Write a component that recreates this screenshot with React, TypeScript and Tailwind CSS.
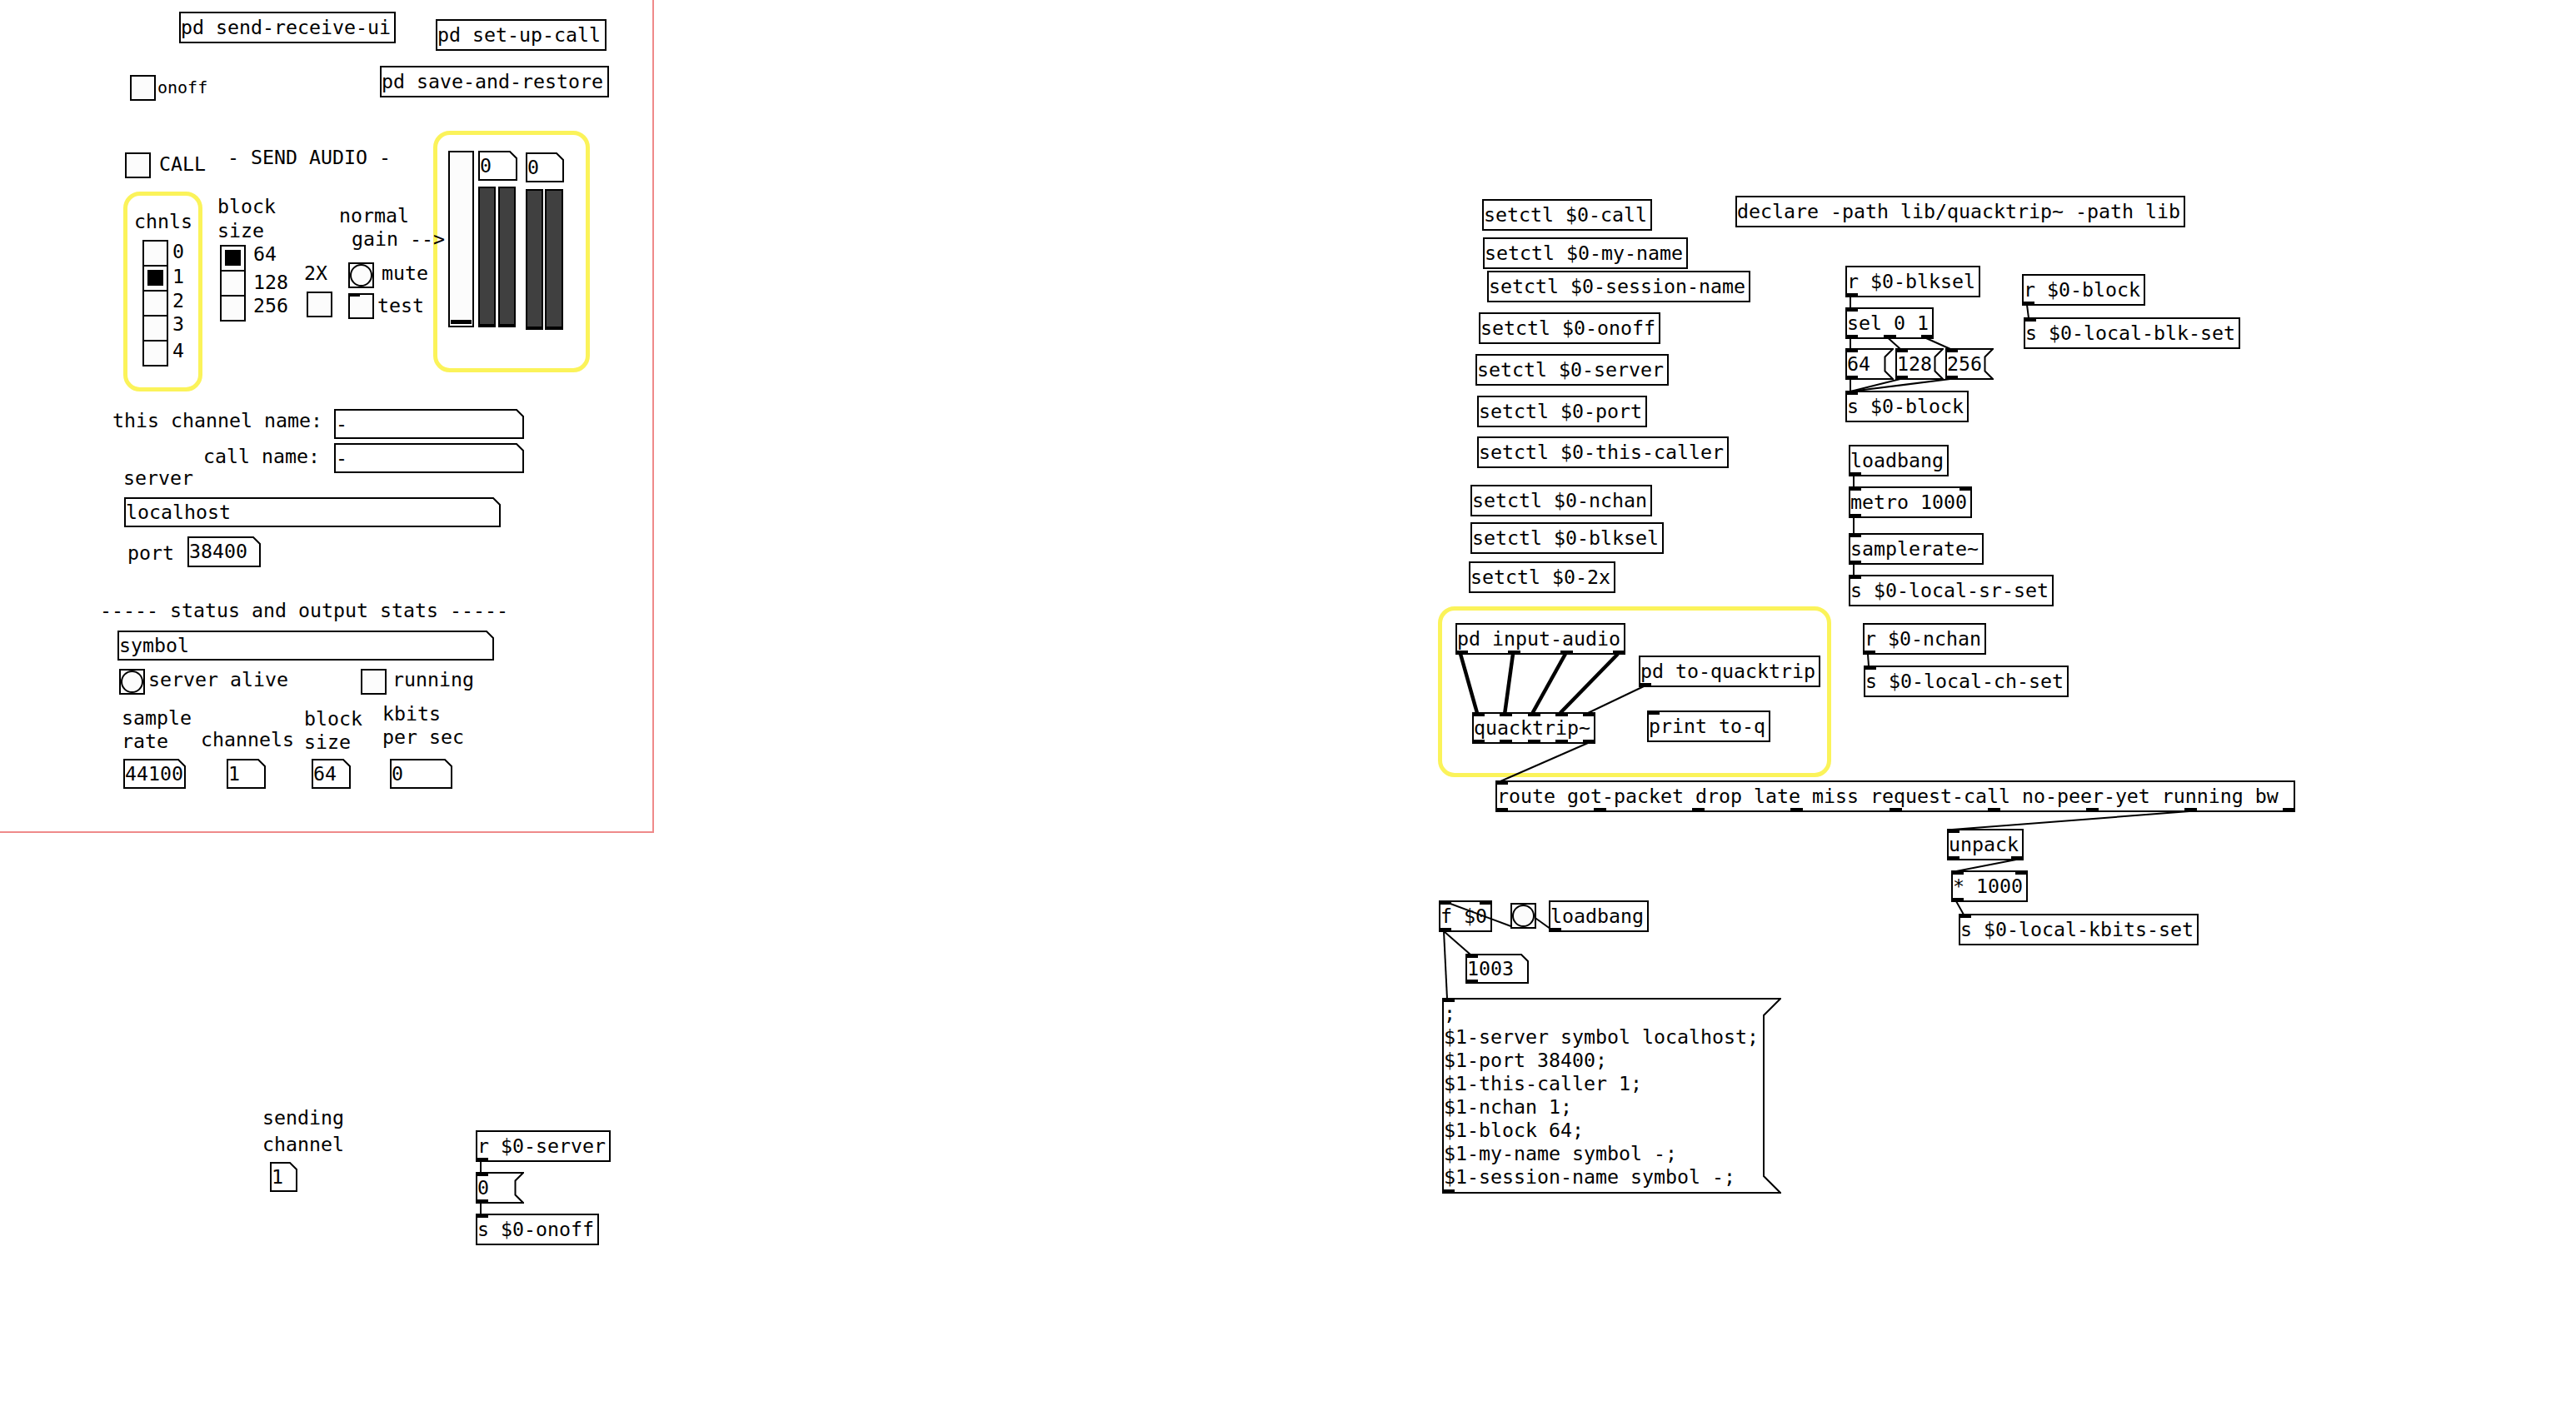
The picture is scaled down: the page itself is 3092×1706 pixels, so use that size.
import type { CSSProperties } from "react";

/**
 * Pure Data patch view: a free canvas of boxes, GUI widgets and wires.
 * Every position below is taken from the patch, so boxes are placed
 * absolutely and the wires are computed from the box data.
 */

const NUB_W = 15;
const NUB_H = 5;
const BOX_H = 38;

type Kind = "obj" | "msg" | "atom" | "bng";

interface PdBox {
  id: string;
  kind: Kind;
  x: number;
  y: number;
  w: number;
  h?: number;
  text?: string;
  ins?: number;
  outs?: number;
}

// [from, outlet, to, inlet, signal]
type Wire = [string, number, string, number, boolean?];

interface Note {
  x: number;
  y: number;
  text: string;
  cls?: string;
}

const BOXES: PdBox[] = [
  // top of the GOP panel
  { id: "sru", kind: "obj", x: 215, y: 14, w: 260, text: "pd send-receive-ui" },
  { id: "suc", kind: "obj", x: 523, y: 23, w: 205, text: "pd set-up-call" },
  { id: "sar", kind: "obj", x: 456, y: 79, w: 275, text: "pd save-and-restore" },
  { id: "nbx1", kind: "atom", x: 574, y: 181, w: 47, h: 36, text: "0" },
  { id: "nbx2", kind: "atom", x: 631, y: 183, w: 46, h: 36, text: "0" },
  { id: "a_name", kind: "atom", x: 401, y: 491, w: 228, h: 36, text: "-" },
  { id: "a_call", kind: "atom", x: 401, y: 532, w: 228, h: 36, text: "-" },
  { id: "a_host", kind: "atom", x: 149, y: 597, w: 452, h: 36, text: "localhost" },
  { id: "a_port", kind: "atom", x: 225, y: 644, w: 88, h: 37, text: "38400" },
  { id: "a_stat", kind: "atom", x: 141, y: 757, w: 452, h: 36, text: "symbol" },
  { id: "a_sr", kind: "atom", x: 148, y: 911, w: 75, h: 36, text: "44100" },
  { id: "a_ch", kind: "atom", x: 272, y: 911, w: 47, h: 36, text: "1" },
  { id: "a_bs", kind: "atom", x: 374, y: 911, w: 47, h: 36, text: "64" },
  { id: "a_kb", kind: "atom", x: 468, y: 911, w: 75, h: 36, text: "0" },

  // below the panel
  { id: "a_send", kind: "atom", x: 324, y: 1395, w: 33, h: 36, text: "1" },
  { id: "r_server", kind: "obj", x: 571, y: 1357, w: 162, outs: 1, text: "r $0-server" },
  { id: "m_zero", kind: "msg", x: 571, y: 1407, w: 58, ins: 1, outs: 1, text: "0" },
  { id: "s_onoff", kind: "obj", x: 571, y: 1457, w: 148, ins: 1, text: "s $0-onoff" },

  // setctl column
  { id: "c_call", kind: "obj", x: 1779, y: 239, w: 204, text: "setctl $0-call" },
  { id: "c_myname", kind: "obj", x: 1780, y: 285, w: 246, text: "setctl $0-my-name" },
  { id: "c_session", kind: "obj", x: 1785, y: 325, w: 316, text: "setctl $0-session-name" },
  { id: "c_onoff", kind: "obj", x: 1775, y: 375, w: 218, text: "setctl $0-onoff" },
  { id: "c_server", kind: "obj", x: 1771, y: 425, w: 232, text: "setctl $0-server" },
  { id: "c_port", kind: "obj", x: 1773, y: 475, w: 204, text: "setctl $0-port" },
  { id: "c_caller", kind: "obj", x: 1773, y: 524, w: 302, text: "setctl $0-this-caller" },
  { id: "c_nchan", kind: "obj", x: 1765, y: 582, w: 218, text: "setctl $0-nchan" },
  { id: "c_blksel", kind: "obj", x: 1765, y: 627, w: 232, text: "setctl $0-blksel" },
  { id: "c_2x", kind: "obj", x: 1763, y: 674, w: 176, text: "setctl $0-2x" },

  { id: "declare", kind: "obj", x: 2083, y: 235, w: 540, text: "declare -path lib/quacktrip~ -path lib" },

  // block size selection
  { id: "r_blksel", kind: "obj", x: 2215, y: 319, w: 162, outs: 1, text: "r $0-blksel" },
  { id: "sel", kind: "obj", x: 2215, y: 369, w: 106, ins: 1, outs: 3, text: "sel 0 1" },
  { id: "m64", kind: "msg", x: 2215, y: 418, w: 58, ins: 1, outs: 1, text: "64" },
  { id: "m128", kind: "msg", x: 2275, y: 418, w: 58, ins: 1, outs: 1, text: "128" },
  { id: "m256", kind: "msg", x: 2335, y: 418, w: 58, ins: 1, outs: 1, text: "256" },
  { id: "s_block", kind: "obj", x: 2215, y: 469, w: 148, ins: 1, text: "s $0-block" },
  { id: "r_block", kind: "obj", x: 2427, y: 329, w: 148, outs: 1, text: "r $0-block" },
  { id: "s_blkset", kind: "obj", x: 2429, y: 381, w: 260, ins: 1, text: "s $0-local-blk-set" },

  // sample rate poll
  { id: "lb1", kind: "obj", x: 2219, y: 534, w: 120, outs: 1, text: "loadbang" },
  { id: "metro", kind: "obj", x: 2219, y: 584, w: 148, ins: 2, outs: 1, text: "metro 1000" },
  { id: "srate", kind: "obj", x: 2219, y: 640, w: 162, ins: 1, outs: 1, text: "samplerate~" },
  { id: "s_srset", kind: "obj", x: 2219, y: 690, w: 246, ins: 1, text: "s $0-local-sr-set" },

  // audio path
  { id: "input", kind: "obj", x: 1747, y: 748, w: 204, outs: 4, text: "pd input-audio" },
  { id: "toqt", kind: "obj", x: 1967, y: 787, w: 218, outs: 1, text: "pd to-quacktrip" },
  { id: "qt", kind: "obj", x: 1767, y: 855, w: 148, ins: 5, outs: 5, text: "quacktrip~" },
  { id: "print", kind: "obj", x: 1977, y: 853, w: 148, ins: 1, text: "print to-q" },
  { id: "r_nchan", kind: "obj", x: 2236, y: 748, w: 148, outs: 1, text: "r $0-nchan" },
  { id: "s_chset", kind: "obj", x: 2237, y: 799, w: 246, ins: 1, text: "s $0-local-ch-set" },
  {
    id: "route",
    kind: "obj",
    x: 1795,
    y: 937,
    w: 960,
    ins: 1,
    outs: 9,
    text: "route got-packet drop late miss request-call no-peer-yet running bw",
  },
  { id: "unpack", kind: "obj", x: 2337, y: 995, w: 92, ins: 1, outs: 2, text: "unpack" },
  { id: "mul", kind: "obj", x: 2342, y: 1045, w: 92, ins: 2, outs: 1, text: "* 1000" },
  { id: "s_kbits", kind: "obj", x: 2351, y: 1097, w: 288, ins: 1, text: "s $0-local-kbits-set" },

  // defaults on load
  { id: "f0", kind: "obj", x: 1727, y: 1081, w: 64, ins: 2, outs: 1, text: "f $0" },
  { id: "bng", kind: "bng", x: 1813, y: 1084, w: 31, h: 31, ins: 1, outs: 1 },
  { id: "lb2", kind: "obj", x: 1859, y: 1081, w: 120, outs: 1, text: "loadbang" },
  { id: "n1003", kind: "atom", x: 1759, y: 1145, w: 76, h: 36, ins: 1, outs: 1, text: "1003" },
  {
    id: "bigmsg",
    kind: "msg",
    x: 1731,
    y: 1198,
    w: 407,
    h: 235,
    ins: 1,
    outs: 1,
    text: [
      ";",
      "$1-server symbol localhost;",
      "$1-port 38400;",
      "$1-this-caller 1;",
      "$1-nchan 1;",
      "$1-block 64;",
      "$1-my-name symbol -;",
      "$1-session-name symbol -;",
    ].join("\n"),
  },
];

const WIRES: Wire[] = [
  ["r_server", 0, "m_zero", 0],
  ["m_zero", 0, "s_onoff", 0],
  ["r_blksel", 0, "sel", 0],
  ["sel", 0, "m64", 0],
  ["sel", 1, "m128", 0],
  ["sel", 2, "m256", 0],
  ["m64", 0, "s_block", 0],
  ["m128", 0, "s_block", 0],
  ["m256", 0, "s_block", 0],
  ["r_block", 0, "s_blkset", 0],
  ["lb1", 0, "metro", 0],
  ["metro", 0, "srate", 0],
  ["srate", 0, "s_srset", 0],
  ["input", 0, "qt", 0, true],
  ["input", 1, "qt", 1, true],
  ["input", 2, "qt", 2, true],
  ["input", 3, "qt", 3, true],
  ["toqt", 0, "qt", 4],
  ["qt", 4, "route", 0],
  ["r_nchan", 0, "s_chset", 0],
  ["route", 7, "unpack", 0],
  ["unpack", 1, "mul", 0],
  ["mul", 0, "s_kbits", 0],
  ["lb2", 0, "bng", 0],
  ["bng", 0, "f0", 0],
  ["f0", 0, "n1003", 0],
  ["f0", 0, "bigmsg", 0],
];

const NOTES: Note[] = [
  { x: 189, y: 93, text: "onoff", cls: "text-[20px] leading-[24px]" },
  { x: 191, y: 183, text: "CALL" },
  { x: 273, y: 175, text: "- SEND AUDIO -" },
  { x: 161, y: 252, text: "chnls" },
  { x: 207, y: 288, text: "0" },
  { x: 207, y: 318, text: "1" },
  { x: 207, y: 347, text: "2" },
  { x: 207, y: 375, text: "3" },
  { x: 207, y: 407, text: "4" },
  { x: 261, y: 233, text: "block\nsize", cls: "leading-[29px]" },
  { x: 304, y: 291, text: "64" },
  { x: 304, y: 325, text: "128" },
  { x: 304, y: 353, text: "256" },
  { x: 365, y: 314, text: "2X" },
  { x: 407, y: 245, text: "normal" },
  { x: 422, y: 273, text: "gain -->" },
  { x: 458, y: 314, text: "mute" },
  { x: 453, y: 353, text: "test" },
  { x: 135, y: 491, text: "this channel name:" },
  { x: 244, y: 534, text: "call name:" },
  { x: 148, y: 560, text: "server" },
  { x: 153, y: 650, text: "port" },
  { x: 120, y: 719, text: "----- status and output stats -----" },
  { x: 178, y: 802, text: "server alive" },
  { x: 471, y: 802, text: "running" },
  { x: 146, y: 848, text: "sample\nrate" },
  { x: 241, y: 874, text: "channels" },
  { x: 365, y: 849, text: "block\nsize" },
  { x: 459, y: 843, text: "kbits\nper sec" },
  { x: 315, y: 1326, text: "sending\nchannel", cls: "leading-[32px]" },
];

const TOGGLES = [
  { x: 156, y: 90 },
  { x: 150, y: 183 },
  { x: 368, y: 350 },
  { x: 418, y: 352, nub: true },
  { x: 433, y: 803 },
];

const BANGS = [
  { x: 418, y: 315 },
  { x: 143, y: 803 },
];

const RADIOS = [
  { x: 171, y: 288, n: 5, sel: 1 },
  { x: 264, y: 294, n: 3, sel: 0 },
];

const METERS = [
  { x: 574, y: 224, w: 21 },
  { x: 598, y: 224, w: 21 },
  { x: 631, y: 227, w: 21 },
  { x: 654, y: 227, w: 22 },
];

const GROUPS = [
  { x: 148, y: 230, w: 95, h: 240 },
  { x: 520, y: 157, w: 188, h: 290 },
  { x: 1726, y: 728, w: 472, h: 205 },
];

const boxById = new Map(BOXES.map((b) => [b.id, b]));

function heightOf(b: PdBox) {
  return b.h ?? BOX_H;
}

function flagOf(h: number) {
  return Math.min(h / 4, 20);
}

// message boxes draw the flag past the text area, the nubs stay on the text part
function ioWidth(b: PdBox) {
  return b.kind === "msg" ? b.w - flagOf(heightOf(b)) : b.w;
}

function nubLeft(b: PdBox, i: number, n: number) {
  return n > 1 ? (i * (ioWidth(b) - NUB_W)) / (n - 1) : 0;
}

function at(x: number, y: number, w?: number, h?: number): CSSProperties {
  return { left: x, top: y, width: w, height: h };
}

function MsgOutline({ w, h }: { w: number; h: number }) {
  const c = flagOf(h);
  const pts = `1,1 ${w - 1},1 ${w - 1 - c},${1 + c} ${w - 1 - c},${h - 1 - c} ${w - 1},${h - 1} 1,${h - 1}`;
  return (
    <svg className="absolute inset-0" width={w} height={h}>
      <polygon points={pts} fill="none" stroke="black" strokeWidth={2} />
    </svg>
  );
}

function AtomOutline({ w, h }: { w: number; h: number }) {
  const c = 8;
  const pts = `1,1 ${w - 1 - c},1 ${w - 1},${1 + c} ${w - 1},${h - 1} 1,${h - 1}`;
  return (
    <svg className="absolute inset-0" width={w} height={h}>
      <polygon points={pts} fill="none" stroke="black" strokeWidth={2} />
    </svg>
  );
}

function BangFace() {
  return (
    <div className="absolute inset-0 border-2 border-black bg-[#fcfcfc]">
      <div className="absolute inset-0 rounded-full border-2 border-black" />
    </div>
  );
}

function Box({ b }: { b: PdBox }) {
  const h = heightOf(b);
  const ins = b.kind === "bng" ? 0 : b.ins ?? 0;
  const outs = b.kind === "bng" ? 0 : b.outs ?? 0;

  return (
    <div className="absolute" style={at(b.x, b.y, b.w, h)}>
      {b.kind === "obj" && <div className="absolute inset-0 border-2 border-black" />}
      {b.kind === "msg" && <MsgOutline w={b.w} h={h} />}
      {b.kind === "atom" && <AtomOutline w={b.w} h={h} />}
      {b.kind === "bng" && <BangFace />}
      {b.text && (
        <div
          className={`relative whitespace-pre pl-[2px] leading-[28px] ${
            b.kind === "atom" ? "pt-[4px]" : "pt-[5px]"
          }`}
        >
          {b.text}
        </div>
      )}
      {Array.from({ length: ins }, (_, i) => (
        <span
          key={`in${i}`}
          className="absolute top-0 h-[5px] w-[15px] bg-black"
          style={{ left: nubLeft(b, i, ins) }}
        />
      ))}
      {Array.from({ length: outs }, (_, i) => (
        <span
          key={`out${i}`}
          className="absolute bottom-0 h-[5px] w-[15px] bg-black"
          style={{ left: nubLeft(b, i, outs) }}
        />
      ))}
    </div>
  );
}

function Wires() {
  return (
    <svg className="pointer-events-none absolute inset-0" width={3092} height={1706}>
      {WIRES.map(([from, o, to, i, sig], k) => {
        const a = boxById.get(from)!;
        const b = boxById.get(to)!;
        const x1 = a.x + nubLeft(a, o, a.outs ?? 1) + 6;
        const y1 = a.y + heightOf(a) - NUB_H + 4;
        const x2 = b.x + nubLeft(b, i, b.ins ?? 1) + 6;
        const y2 = b.y + 1;
        return (
          <line
            key={k}
            x1={x1}
            y1={y1}
            x2={x2}
            y2={y2}
            stroke="black"
            strokeWidth={sig ? 4.5 : 2}
          />
        );
      })}
    </svg>
  );
}

function Toggle({ x, y, nub }: { x: number; y: number; nub?: boolean }) {
  return (
    <div className="absolute border-2 border-black bg-[#fcfcfc]" style={at(x, y, 31, 31)}>
      {nub && <span className="absolute -left-[2px] -top-[2px] h-[4px] w-[14px] bg-black" />}
    </div>
  );
}

function Bang({ x, y }: { x: number; y: number }) {
  return (
    <div className="absolute" style={at(x, y, 31, 31)}>
      <BangFace />
    </div>
  );
}

function VRadio({ x, y, n, sel }: { x: number; y: number; n: number; sel: number }) {
  return (
    <div className="absolute flex flex-col" style={at(x, y, 31)}>
      {Array.from({ length: n }, (_, i) => (
        <div
          key={i}
          className="relative -mt-[2px] h-[32px] w-[31px] border-2 border-black bg-[#fcfcfc] first:mt-0"
        >
          {i === sel && <div className="absolute left-[4px] top-[4px] h-[19px] w-[19px] bg-black" />}
        </div>
      ))}
    </div>
  );
}

export default function App() {
  return (
    <div className="relative h-[1706px] w-[3092px] overflow-hidden bg-white font-['DejaVu_Sans_Mono',monospace] text-[23.25px] text-black">
      {/* canvas groups */}
      {GROUPS.map((g, i) => (
        <div
          key={i}
          className="absolute rounded-[20px] border-[5px] border-[#fbf35a]"
          style={at(g.x, g.y, g.w, g.h)}
        />
      ))}

      {/* graph-on-parent area */}
      <div className="absolute border-2 border-[#ef8a8a]" style={at(-6, -6, 791, 1006)} />

      <Wires />

      {BOXES.map((b) => (
        <Box key={b.id} b={b} />
      ))}

      {NOTES.map((n, i) => (
        <div
          key={i}
          className={`absolute whitespace-pre ${n.cls ?? "leading-[28px]"}`}
          style={at(n.x, n.y)}
        >
          {n.text}
        </div>
      ))}

      {TOGGLES.map((t, i) => (
        <Toggle key={i} {...t} />
      ))}
      {BANGS.map((b, i) => (
        <Bang key={i} {...b} />
      ))}
      {RADIOS.map((r, i) => (
        <VRadio key={i} {...r} />
      ))}

      {/* gain slider */}
      <div className="absolute border-2 border-black bg-[#fcfcfc]" style={at(538, 181, 31, 212)}>
        <div className="absolute bottom-[2px] left-[1px] right-[1px] h-[5px] bg-black" />
      </div>

      {/* level meters */}
      {METERS.map((m, i) => (
        <div
          key={i}
          className="absolute border-2 border-b-[4px] border-black bg-[#404040]"
          style={at(m.x, m.y, m.w, 169)}
        />
      ))}
    </div>
  );
}
